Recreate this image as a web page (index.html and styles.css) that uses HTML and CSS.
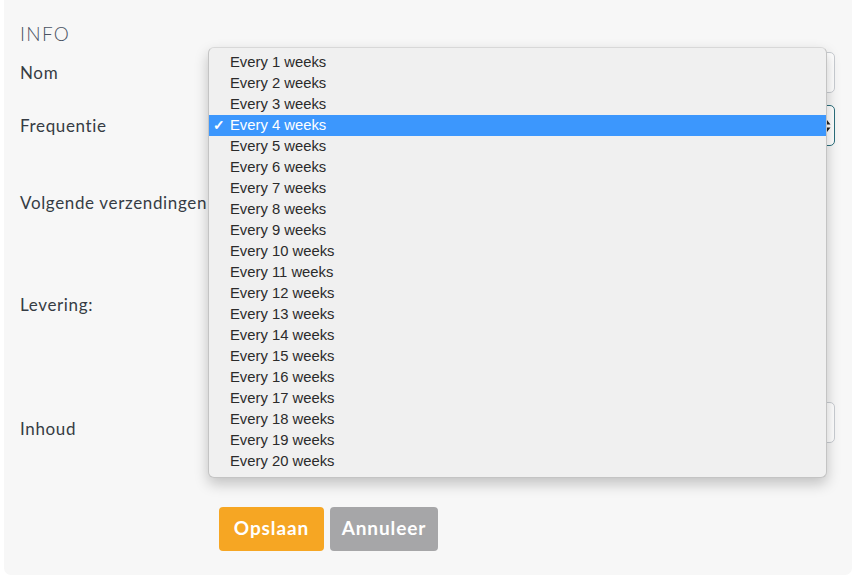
FILE: index.html
```html
<!DOCTYPE html>
<html lang="nl">
<head>
<meta charset="utf-8">
<title>Info</title>
<link rel="stylesheet" href="styles.css">
</head>
<body>
<div class="panel">
  <h2 class="heading">INFO</h2>

  <div class="row row-nom">
    <label class="lbl">Nom</label>
    <div class="field"><div class="input"></div></div>
  </div>

  <div class="row row-freq">
    <label class="lbl">Frequentie</label>
    <div class="field">
      <div class="input select">
        <svg class="arrows" width="8" height="14" viewBox="0 0 8 14"><path d="M4 1 L7.5 5.5 H0.5 Z M4 13 L7.5 8.5 H0.5 Z" fill="#222"/></svg>
      </div>
    </div>
  </div>

  <div class="row row-next">
    <label class="lbl">Volgende verzendingen</label>
    <div class="field"></div>
  </div>

  <div class="row row-lev">
    <label class="lbl">Levering:</label>
    <div class="field"></div>
  </div>

  <div class="row row-inh">
    <label class="lbl">Inhoud</label>
    <div class="field"><div class="input"></div></div>
  </div>

  <div class="row row-btn">
    <div></div>
    <div class="actions">
      <button class="btn btn-save">Opslaan</button>
      <button class="btn btn-cancel">Annuleer</button>
    </div>
  </div>

  <ul class="menu">
    <li>Every 1 weeks</li>
    <li>Every 2 weeks</li>
    <li>Every 3 weeks</li>
    <li class="sel"><span class="check">✓</span>Every 4 weeks</li>
    <li>Every 5 weeks</li>
    <li>Every 6 weeks</li>
    <li>Every 7 weeks</li>
    <li>Every 8 weeks</li>
    <li>Every 9 weeks</li>
    <li>Every 10 weeks</li>
    <li>Every 11 weeks</li>
    <li>Every 12 weeks</li>
    <li>Every 13 weeks</li>
    <li>Every 14 weeks</li>
    <li>Every 15 weeks</li>
    <li>Every 16 weeks</li>
    <li>Every 17 weeks</li>
    <li>Every 18 weeks</li>
    <li>Every 19 weeks</li>
    <li>Every 20 weeks</li>
  </ul>
</div>
</body>
</html>
```

FILE: styles.css
```css
* { box-sizing: border-box; }
html, body { margin: 0; padding: 0; background: #ffffff; }
body { width: 861px; height: 576px; overflow: hidden; }

.panel {
  position: relative;
  margin: 0 9px 0 4px;
  height: 575px;
  background: #f7f7f7;
  border-radius: 0 0 7px 7px;
  padding: 22px 17px 0 16px;
  font-family: Lato, "Noto Sans", sans-serif;
  color: #363c44;
}

.heading {
  margin: 0;
  height: 22px;
  line-height: 23px;
  font-size: 19px;
  font-weight: 300;
  color: #4a5363;
  letter-spacing: 1.3px;
}

.row {
  display: grid;
  grid-template-columns: 199px 1fr;
  align-items: start;
}
.lbl {
  display: block;
  font-size: 17px;
  line-height: 20px;
  font-weight: 400;
  letter-spacing: 0.65px;
  white-space: nowrap;
}

.row-nom { margin-top: 8px; height: 41px; }
.row-nom .lbl { margin-top: 11px; }

.row-freq { margin-top: 12px; height: 41px; }
.row-freq .lbl { margin-top: 11px; }

.row-next { margin-top: 12px; height: 90px; }
.row-next .lbl { margin-top: 35px; }

.row-lev { margin-top: 12px; height: 130px; }
.row-lev .lbl { margin-top: 35px; }

.row-inh { margin-top: 12px; height: 70px; }
.row-inh .lbl { margin-top: 17px; }

.row-btn { margin-top: 35px; }

.input {
  height: 41px;
  background: #ffffff;
  border: 1.5px solid #c9cdd2;
  border-radius: 5px;
}
.select {
  position: relative;
  border-color: #2b6f7c;
}
.arrows {
  position: absolute;
  right: 3px;
  top: 13px;
}

.actions { display: flex; gap: 6px; }
.btn {
  height: 44px;
  border: 0;
  border-radius: 4px;
  color: #ffffff;
  font-family: Lato, "Noto Sans", sans-serif;
  font-size: 19px;
  font-weight: 700;
  letter-spacing: 0.9px;
  padding: 0 0 4px;
}
.btn-save { width: 105px; background: #f6a623; }
.btn-cancel { width: 108px; background: #a6a6a8; }

.menu {
  position: absolute;
  left: 204px;
  top: 47px;
  width: 619px;
  margin: 0;
  padding: 4px 0 5px;
  list-style: none;
  background: #f0f0f0;
  border: 1px solid #c4c4c4;
  border-top-color: #d8d8d8;
  border-radius: 6px;
  box-shadow: 0 6px 14px rgba(0, 0, 0, 0.22);
  font-family: "Liberation Sans", Arial, sans-serif;
  font-size: 14.8px;
  color: #2b2b2b;
}
.menu li {
  position: relative;
  height: 21px;
  line-height: 21px;
  padding-left: 21px;
}
.menu li.sel {
  background: #3c97fd;
  color: #ffffff;
}
.check {
  position: absolute;
  left: 4px;
  top: 0;
  font-size: 14px;
  font-weight: 700;
}
```
